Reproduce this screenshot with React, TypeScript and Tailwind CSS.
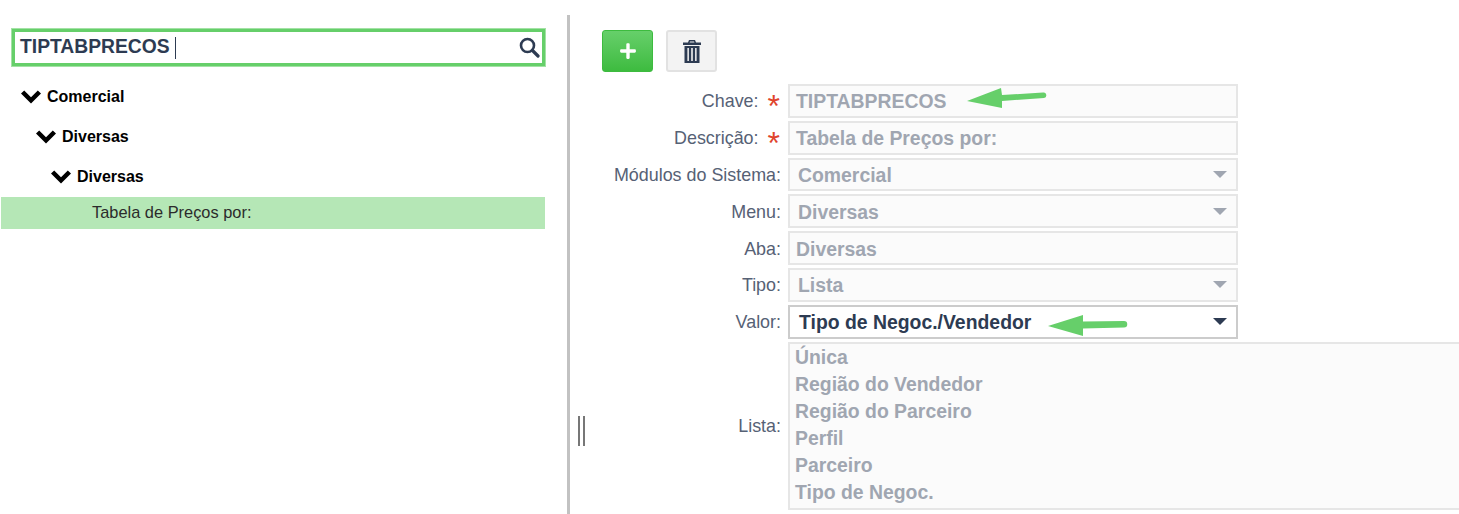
import { FaPlus } from 'react-icons/fa'

const FONT = "font-['Liberation_Sans',Arial,sans-serif]"

function Chevron() {
  return (
    <svg className="w-[20px] h-[14px] shrink-0" viewBox="0 0 20 14" fill="#000">
      <path d="M0 3.6 L3.2 .4 L10 7.2 L16.8 .4 L20 3.6 L10 13.6 Z" />
    </svg>
  )
}

function Caret({ dark }: { dark?: boolean }) {
  return (
    <svg className="w-[14px] h-[7px] shrink-0" viewBox="0 0 14 7" fill={dark ? '#2d3b52' : '#a0a6b1'}>
      <path d="M0 0 H14 L7 7 Z" />
    </svg>
  )
}

function Row({ label, required, children, tall }: { label: string; required?: boolean; children: React.ReactNode; tall?: boolean }) {
  return (
    <div className={`flex items-center ${tall ? 'h-[168px]' : 'h-[33.8px]'}`}>
      <div className="w-[218px] pr-[7px] pt-[2px] flex justify-end items-center text-[17.9px] text-[#566175] whitespace-nowrap">
        <span>{label}:</span>
        {required && <span className="ml-[9px] mr-px text-[#e0442c] text-[32px] leading-none h-[24px]">*</span>}
      </div>
      {children}
    </div>
  )
}

function Field({ value, select }: { value: string; select?: boolean }) {
  return (
    <div className={`w-[450px] h-full border-2 border-[#e6e6e6] bg-[#fbfbfb] flex items-center justify-between ${select ? 'pl-[8px]' : 'pl-[6px]'} pr-[9px] text-[19.4px] font-bold text-[#a0a6b1]`}>
      <span className="pt-[2px]">{value}</span>
      {select && <Caret />}
    </div>
  )
}

const listItems = ['Única', 'Região do Vendedor', 'Região do Parceiro', 'Perfil', 'Parceiro', 'Tipo de Negoc.']

export default function App() {
  return (
    <div className={`${FONT} flex h-[514px] w-[1459px] bg-white overflow-hidden`}>
      {/* Tree side */}
      <div className="w-[567px] shrink-0 pt-[28px] pr-[21px]">
        <div className="ml-[11px] h-[39px] border border-[#a3e2a5]">
          <div className="h-full border-[3px] border-[#66cf6a] flex items-center justify-between pl-[5px] pr-[2px]">
            <div className="flex items-center text-[19.3px] font-bold text-[#2d3b52]">
              TIPTABPRECOS
              <span className="ml-[5px] w-px h-[22px] bg-[#2d3b52]" />
            </div>
            <svg className="w-[21px] h-[21px]" viewBox="0 0 21 21" fill="none" stroke="#2d3b52">
              <circle cx="8.5" cy="8.5" r="6.5" strokeWidth="2.6" />
              <path d="M13.5 13.5 L19 19" strokeWidth="3.2" strokeLinecap="round" />
            </svg>
          </div>
        </div>
        <div className="mt-[10px] text-[16px] font-bold text-black">
          <div className="h-[40px] flex items-center gap-[6px] pl-[21px]"><Chevron />Comercial</div>
          <div className="h-[40px] flex items-center gap-[6px] pl-[36px]"><Chevron />Diversas</div>
          <div className="h-[40px] flex items-center gap-[6px] pl-[51px]"><Chevron />Diversas</div>
        </div>
        <div className="mx-px h-[32px] bg-[#b5e7b6] flex items-center pl-[91px] pb-[2px] text-[16.4px] text-[#2b2b2b]">
          Tabela de Preços por:
        </div>
      </div>

      <div className="w-[3px] shrink-0 mt-[15px] bg-[#c2c2c2]" />

      {/* Form side */}
      <div className="relative flex-1 pt-[30px]">
        <div className="absolute left-[8px] top-[416px] w-[7px] h-[30px] border-x-2 border-[#777]" />

        <div className="flex gap-[13px] pl-[32px]">
          <button className="w-[51px] h-[42px] rounded-[3px] border border-[#3dbb3f] bg-gradient-to-b from-[#66cf6a] to-[#3dbb3f] flex items-center justify-center text-white">
            <FaPlus className="w-[18px] h-[18px]" />
          </button>
          <button className="w-[51px] h-[42px] rounded-[3px] border-2 border-[#e2e2e2] bg-[#f3f3f3] flex items-center justify-center">
            <svg className="w-[18px] h-[23px]" viewBox="0 0 18 23" fill="#2d3b52">
              <path d="M6 0 H12 L13 2.5 H18 V5 H0 V2.5 H5 Z M7 1.4 L6.6 2.5 H11.4 L11 1.4 Z" fillRule="evenodd" />
              <path d="M1.5 6 H16.5 V23 H1.5 Z M4.4 8 V21 H5.9 V8 Z M8.2 8 V21 H9.8 V8 Z M12.1 8 V21 H13.6 V8 Z" fillRule="evenodd" />
            </svg>
          </button>
        </div>

        <div className="mt-[12px] flex flex-col gap-[3px]">
          <Row label="Chave" required><Field value="TIPTABPRECOS" /></Row>
          <Row label="Descrição" required><Field value="Tabela de Preços por:" /></Row>
          <Row label="Módulos do Sistema"><Field value="Comercial" select /></Row>
          <Row label="Menu"><Field value="Diversas" select /></Row>
          <Row label="Aba"><Field value="Diversas" /></Row>
          <Row label="Tipo"><Field value="Lista" select /></Row>
          <Row label="Valor">
            <div className="w-[450px] h-full border-2 border-[#cccccc] bg-white flex items-center justify-between pl-[9px] pr-[9px] text-[19.4px] font-bold text-[#2d3b52]">
              <span className="pt-[2px]">Tipo de Negoc./Vendedor</span>
              <Caret dark />
            </div>
          </Row>
          <Row label="Lista" tall>
            <div className="flex-1 h-full border-l-2 border-y-2 border-[#e6e6e6] bg-[#fbfbfb] pl-[5px] text-[19.4px] leading-[27px] font-bold text-[#a0a6b1]">
              {listItems.map((item) => (
                <div key={item}>{item}</div>
              ))}
            </div>
          </Row>
        </div>

        {/* annotation arrows */}
        <svg className="absolute left-[397px] top-[88px] w-[152px] h-[22px]" viewBox="0 0 152 22" fill="#66cf6a">
          <path d="M0 13 L34 0 L35 7 L76 4.5 A2.6 2.6 0 0 1 77 10 L35 13 L35 20 Z" />
        </svg>
        <svg className="absolute left-[478px] top-[315px] w-[82px] h-[22px]" viewBox="0 0 82 22" fill="#66cf6a">
          <path d="M0 11 L35 0 L35 6.5 L76 6 A3 3 0 0 1 76 12.5 L35 13.5 L35 21 Z" />
        </svg>
      </div>
    </div>
  )
}
